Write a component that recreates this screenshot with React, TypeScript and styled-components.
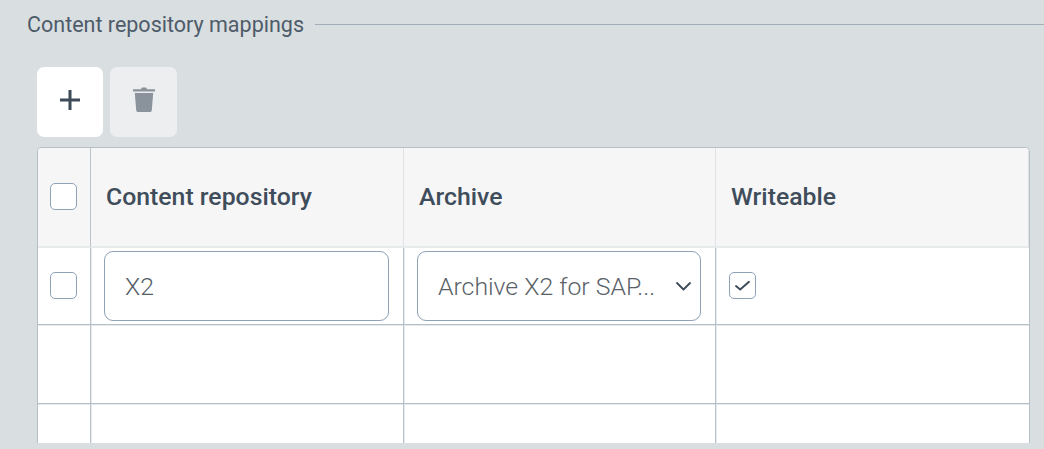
import React from 'react';
import styled, { createGlobalStyle } from 'styled-components';

const GlobalStyle = createGlobalStyle`
html, body {
  margin: 0;
  padding: 0;
  height: 449px;
  overflow: hidden;
  background: #d9dee1;
  font-family: Roboto, "Noto Sans", sans-serif;
}
`;

const Page = styled.div`
  height: 449px;
  box-sizing: border-box;
  padding: 12px 0 6px 27px;
  display: flex;
  flex-direction: column;
  overflow: hidden;
`;

const Legend = styled.div`
  display: flex;
  align-items: center;
  gap: 11px;
  height: 24px;
  font-size: 21.5px;
  color: #4d5b69;
`;

const LegendLine = styled.span`
  flex: 1;
  height: 1px;
  background: #a3afb8;
`;

const Body = styled.div`
  padding: 31px 14px 0 10px;
  flex: 1;
  min-height: 0;
  display: flex;
  flex-direction: column;
`;

const Toolbar = styled.div`
  display: flex;
  gap: 7px;
  margin-bottom: 10px;
`;

const ToolButton = styled.button<{ $disabled?: boolean }>`
  width: ${p => (p.$disabled ? 67 : 66)}px;
  height: 70px;
  padding: 0 0 4px;
  border: none;
  border-radius: 7px;
  display: flex;
  align-items: center;
  justify-content: center;
  background: ${p => (p.$disabled ? '#eceef0' : '#ffffff')};
  color: ${p => (p.$disabled ? '#8a939c' : '#3d4b59')};
`;

const Table = styled.div`
  flex: 1;
  min-height: 0;
  overflow: hidden;
  background: #ffffff;
  border: 1px solid #b4bfc6;
  border-bottom: none;
  border-radius: 5px 5px 0 0;
  display: grid;
  grid-template-columns: 53px 313px 312px 1fr;
  grid-template-rows: 100px 77px 79px;
  grid-auto-rows: 79px;
`;

const HeadCell = styled.div<{ $first?: boolean }>`
  background: #f6f6f6;
  border-bottom: 2px solid #e8ebec;
  border-right: 1px solid ${p => (p.$first ? '#b9c3c9' : '#dfe3e5')};
  display: flex;
  align-items: center;
  padding: 0 0 2px 15px;
  font-size: 24.8px;
  font-weight: 500;
  color: #3f4d5b;
  &:last-child {
    border-right: none;
  }
`;

const Cell = styled.div`
  border-bottom: 1px solid #b4bfc6;
  border-right: 1px solid #b9c3c9;
  box-shadow: 1px 0 0 #e6eaec, 0 1px 0 #e6eaec;
  display: flex;
  align-items: center;
  padding: 0 14px 0 13px;
  &:nth-child(4n) {
    border-right: none;
  }
`;

const CheckCell = styled(Cell)`
  padding: 0 12px 2px;
`;

const LastCheckCell = styled(Cell)`
  padding: 0 13px 2px;
`;

const HeadCheckCell = styled(HeadCell)`
  padding-left: 12px;
`;

const Check = styled.span`
  width: 27px;
  height: 27px;
  box-sizing: border-box;
  border: 1px solid #8ea2b8;
  border-radius: 5px;
  background: #ffffff;
  display: flex;
  align-items: center;
  justify-content: center;
  color: #3d4b59;
`;

const TextField = styled.div`
  width: 100%;
  height: 70px;
  box-sizing: border-box;
  border: 1px solid #8ea2b8;
  border-radius: 9px;
  background: #ffffff;
  display: flex;
  align-items: center;
  padding: 0 20px;
  font-size: 24.8px;
  font-weight: 300;
  color: #555e66;
`;

const SelectField = styled(TextField)`
  justify-content: space-between;
  padding: 0 8px 0 20px;
  white-space: nowrap;
  color: #5a6269;
`;

const Chevron = () => (
  <svg width="17" height="17" viewBox="0 0 17 17" fill="none" stroke="#3d4b59" strokeWidth="1.8" strokeLinecap="round" strokeLinejoin="round">
    <path d="M2 5 8.500 11.500 15 5" />
  </svg>
);

const Tick = () => (
  <svg width="19" height="19" viewBox="0 0 19 19" fill="none" stroke="#3d4b59" strokeWidth="1.9" strokeLinecap="round" strokeLinejoin="round">
    <path d="M3 10 7.200 13.500 16 5.800" />
  </svg>
);

const PlusIcon = () => (
  <svg width="20" height="20" viewBox="0 0 20 20" fill="none" stroke="currentColor" strokeWidth="3">
    <path d="M10 0V20M0 10H20" />
  </svg>
);

const TrashIcon = () => (
  <svg width="24" height="28" viewBox="0 1 24 28" fill="currentColor">
    <path d="M1 4.200h7.800L10 2.600h4l1.200 1.600H23v2.200H1zM2.800 8h18.400l-1.400 17.200c-.1 1-.9 1.800-1.900 1.800H6.100c-1 0-1.800-.8-1.900-1.800z" />
  </svg>
);

export default function App() {
  return (
    <Page>
      <GlobalStyle />
      <Legend>
        Content repository mappings
        <LegendLine />
      </Legend>
      <Body>
        <Toolbar>
          <ToolButton><PlusIcon /></ToolButton>
          <ToolButton $disabled><TrashIcon /></ToolButton>
        </Toolbar>
        <Table>
          <HeadCheckCell $first><Check /></HeadCheckCell>
          <HeadCell>Content repository</HeadCell>
          <HeadCell>Archive</HeadCell>
          <HeadCell>Writeable</HeadCell>

          <CheckCell><Check /></CheckCell>
          <Cell><TextField>X2</TextField></Cell>
          <Cell><SelectField>Archive X2 for SAP...<Chevron /></SelectField></Cell>
          <LastCheckCell><Check><Tick /></Check></LastCheckCell>

          <Cell /><Cell /><Cell /><Cell />
          <Cell /><Cell /><Cell /><Cell />
        </Table>
      </Body>
    </Page>
  );
}
